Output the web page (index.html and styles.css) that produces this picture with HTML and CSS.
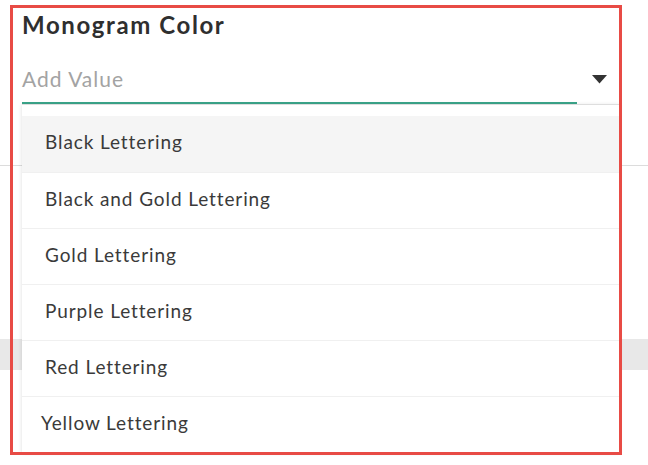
FILE: index.html
```html
<!DOCTYPE html>
<html lang="en">
<head>
<meta charset="utf-8">
<title>Monogram Color</title>
<link rel="stylesheet" href="styles.css">
</head>
<body>
<div class="page">
  <div class="field">
    <h2 class="field-label">Monogram Color</h2>
    <div class="select">
      <div class="select-input">Add Value</div>
      <div class="select-arrow"><svg width="15" height="9" viewBox="0 0 15 9"><path d="M0 0H15L7.5 8.5Z" fill="#333"/></svg></div>
    </div>
    <ul class="menu">
      <li class="menu-item is-hover">Black Lettering</li>
      <li class="menu-item">Black and Gold Lettering</li>
      <li class="menu-item">Gold Lettering</li>
      <li class="menu-item">Purple Lettering</li>
      <li class="menu-item">Red Lettering</li>
      <li class="menu-item menu-item--shift">Yellow Lettering</li>
    </ul>
  </div>
  <div class="bg-divider"></div>
  <div class="bg-band"></div>
  <div class="highlight"></div>
</div>
</body>
</html>
```
FILE: styles.css
```css
* { box-sizing: border-box; }
html, body { margin: 0; padding: 0; background: #fff; }
body { font-family: "Lato", "Open Sans", sans-serif; color: #333; }
.page { position: relative; width: 648px; height: 465px; overflow: hidden; }
.field { position: relative; padding: 11px 29px 0 22px; }
.field-label { margin: 0; font-size: 24px; line-height: 28px; font-weight: 700; letter-spacing: 1.6px; color: #2f2f2f; }
.select { display: flex; align-items: flex-end; height: 65px; }
.select-input { flex: 1; height: 65px; padding-top: 26px; font-size: 21px; line-height: 28px; letter-spacing: 1px; color: #a3a3a3; border-bottom: 2px solid #3aa58a; }
.select-arrow { width: 42px; height: 65px; display: flex; justify-content: center; padding-top: 36px; padding-left: 2px; }
.menu { position: absolute; top: 104px; left: 22px; width: 597px; margin: 0; padding: 11px 0 0; list-style: none; background: #fff; border-top: 1px solid #dedede; box-shadow: 0 1px 4px rgba(0,0,0,0.14); }
.menu-item { height: 56px; display: flex; align-items: center; padding: 0 0 5px 23px; font-size: 19px; letter-spacing: 0.9px; color: #3a3a3a; border-top: 1px solid #f0f0f0; }
.menu-item:first-child { border-top: 0; }
.menu-item.is-hover { background: #f5f5f5; }
.menu-item--shift { padding-left: 19px; }
.bg-divider { margin: 61px 0 0 0; height: 1px; background: #dcdcdc; }
.bg-band { margin-top: 173px; height: 31px; background: #e8e8e8; }
.highlight { position: absolute; left: 10px; top: 5px; width: 612px; height: 450px; border: 3px solid #e84b45; pointer-events: none; }
```
